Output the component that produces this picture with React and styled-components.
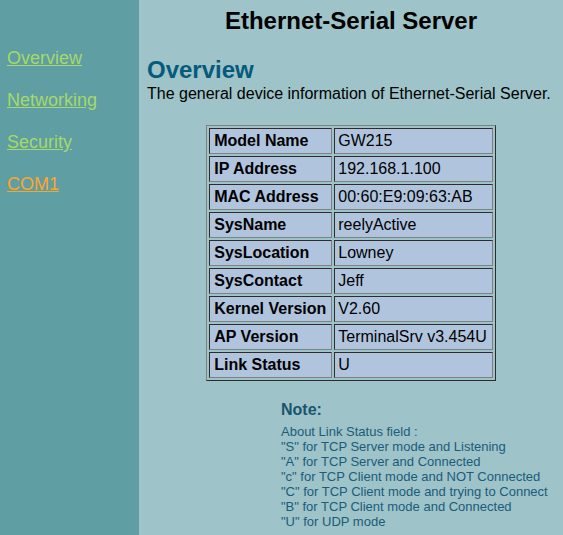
import React from 'react'
import styled, { createGlobalStyle } from 'styled-components'

const GlobalStyle = createGlobalStyle`
  html, body {
    margin: 0;
    padding: 0;
    height: 100%;
    background: #9ec3c8;
  }
  #root {
    height: 100%;
  }
`

const Page = styled.div`
  display: flex;
  min-height: 100vh;
  font-family: "Liberation Sans", Arial, sans-serif;
`

const Sidebar = styled.nav`
  width: 139px;
  flex-shrink: 0;
  background: #5f9ea3;
  padding: 48px 0 0 7px;
  box-sizing: border-box;
  display: flex;
  flex-direction: column;
  gap: 21px;
`

const NavLink = styled.a`
  display: block;
  font-size: 18px;
  line-height: 21px;
  color: ${p => (p.$active ? '#fca52b' : '#a6d96a')};
  text-decoration: underline;
  width: fit-content;
`

const Main = styled.main`
  flex: 1;
  padding: 7px 8px 0 8px;
  color: #000;
`

const Title = styled.h1`
  margin: 0;
  font-size: 24px;
  font-weight: bold;
  text-align: center;
`

const SectionHeading = styled.h2`
  margin: 21px 0 0 0;
  font-size: 24px;
  font-weight: bold;
  color: #065a7c;
`

const Intro = styled.p`
  margin: 1px 0 0 0;
  font-size: 16px;
`

const InfoTable = styled.table`
  margin: 22px auto 0 auto;
  border-collapse: separate;
  border-spacing: 2px;
  border: 1px outset gray;
  font-size: 16px;
`

const Cell = styled.td`
  background: #b0c4de;
  border: 1px inset gray;
  padding: 3px 5px 3px ${p => (p.$label ? '4px' : '3px')};
  font-weight: ${p => (p.$label ? 'bold' : 'normal')};
  white-space: nowrap;
`

const Note = styled.div`
  margin: 20px 0 0 134px;
  color: #18566f;
`

const NoteTitle = styled.div`
  font-size: 16px;
  font-weight: bold;
  margin-bottom: 5px;
`

const NoteLine = styled.div`
  font-size: 13px;
  line-height: 15px;
  color: #1b5c7a;
`

const info = [
  ['Model Name', 'GW215'],
  ['IP Address', '192.168.1.100'],
  ['MAC Address', '00:60:E9:09:63:AB'],
  ['SysName', 'reelyActive'],
  ['SysLocation', 'Lowney'],
  ['SysContact', 'Jeff'],
  ['Kernel Version', 'V2.60'],
  ['AP Version', 'TerminalSrv v3.454U'],
  ['Link Status', 'U']
]

const noteLines = [
  'About Link Status field :',
  '"S" for TCP Server mode and Listening',
  '"A" for TCP Server and Connected',
  '"c" for TCP Client mode and NOT Connected',
  '"C" for TCP Client mode and trying to Connect',
  '"B" for TCP Client mode and Connected',
  '"U" for UDP mode'
]

const links = ['Overview', 'Networking', 'Security', 'COM1']

export default function App () {
  return (
    <>
      <GlobalStyle />
      <Page>
        <Sidebar>
          {links.map(l => (
            <NavLink key={l} href="#" $active={l === 'COM1'}>{l}</NavLink>
          ))}
        </Sidebar>
        <Main>
          <Title>Ethernet-Serial Server</Title>
          <SectionHeading>Overview</SectionHeading>
          <Intro>The general device information of Ethernet-Serial Server.</Intro>
          <InfoTable>
            <tbody>
              {info.map(([k, v]) => (
                <tr key={k}>
                  <Cell $label>{k}</Cell>
                  <Cell>{v}</Cell>
                </tr>
              ))}
            </tbody>
          </InfoTable>
          <Note>
            <NoteTitle>Note:</NoteTitle>
            {noteLines.map(line => (
              <NoteLine key={line}>{line}</NoteLine>
            ))}
          </Note>
        </Main>
      </Page>
    </>
  )
}
